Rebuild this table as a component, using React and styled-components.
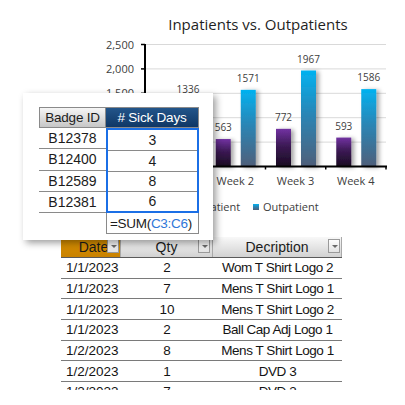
import styled, { createGlobalStyle } from 'styled-components';

const GlobalStyle = createGlobalStyle`
  html, body {
    margin: 0;
    padding: 0;
    background: #fff;
  }
  body {
    font-family: 'Liberation Sans', Arial, sans-serif;
  }
`;

const Page = styled.div`
  position: relative;
  width: 405px;
  height: 405px;
  overflow: hidden;
  background: #fff;
`;

const ChartArea = styled.div`
  margin-left: 100px;
  width: 305px;
  height: 222px;
  svg {
    display: block;
    font-family: 'Open Sans', 'DejaVu Sans', sans-serif;
  }
`;

const DataTable = styled.div`
  margin: 15px 0 0 61px;
  width: 281px;
  height: 153px;
  overflow: hidden;
`;

const HeadRow = styled.div`
  display: grid;
  grid-template-columns: 60px 92px 129px;
  height: 20px;
  border-bottom: 1px solid #5a5a5a;
`;

const HeadCell = styled.div`
  position: relative;
  display: flex;
  align-items: center;
  justify-content: center;
  padding-left: ${p => (p.$active ? '6px' : '0')};
  background: ${p =>
    p.$active
      ? 'linear-gradient(#d89000, #c98200)'
      : 'linear-gradient(#f8f8f8, #d2d2d2)'};
  border-right: 1px solid #a9a9a9;
  font-size: 14px;
  color: #1b1b1b;
`;

const DropButton = styled.span`
  position: absolute;
  right: ${p => p.$right}px;
  top: 2px;
  width: 12px;
  height: 14px;
  box-sizing: border-box;
  border: 1px solid #9a9a9a;
  background: linear-gradient(#fdfdfd, #e3e3e3);
  &::after {
    content: '';
    position: absolute;
    left: 3px;
    top: 5px;
    border-left: 3px solid transparent;
    border-right: 3px solid transparent;
    border-top: 3px solid #6a6a6a;
  }
`;

const Row = styled.div`
  display: grid;
  grid-template-columns: 60px 92px 129px;
  height: 20.67px;
  box-sizing: border-box;
  border-bottom: 1px solid #7a7a7a;
  font-size: 13.5px;
  color: #141414;
  align-items: center;
`;

const Cell = styled.div`
  text-align: ${p => p.$align || 'center'};
  padding-left: ${p => (p.$align === 'left' ? '5px' : '0')};
  letter-spacing: ${p => (p.$tight ? '-0.45px' : '0')};
  white-space: nowrap;
`;

const Card = styled.div`
  position: absolute;
  left: 23px;
  top: 93px;
  width: 190px;
  height: 147px;
  box-sizing: border-box;
  padding: 14px 0 0 16px;
  background: #fff;
  box-shadow: 3px 3px 7px rgba(0, 0, 0, 0.38);
`;

const Sheet = styled.div`
  display: grid;
  grid-template-columns: 67px 93px;
  grid-template-rows: 21px repeat(4, 21.25px) 21px;
  font-size: 14px;
  color: #1c1c1c;
`;

const SheetHead = styled.div`
  display: flex;
  align-items: center;
  justify-content: center;
  box-sizing: border-box;
  border: 1px solid #8a8a8a;
  border-left: ${p => (p.$dark ? 'none' : '1px solid #8a8a8a')};
  background: ${p =>
    p.$dark
      ? 'linear-gradient(#23558a, #0f3765)'
      : 'linear-gradient(#f6f6f6, #c6c6c6)'};
  color: ${p => (p.$dark ? '#fff' : '#1c1c1c')};
  font-size: 13.5px;
  letter-spacing: -0.2px;
`;

const BadgeCell = styled.div`
  display: flex;
  align-items: center;
  justify-content: center;
  box-sizing: border-box;
  border-bottom: 1px solid #8a8a8a;
`;

const Selection = styled.div`
  grid-column: 2;
  grid-row: 2 / span 4;
  display: grid;
  grid-template-rows: repeat(4, 1fr);
  border: 2px solid #1b6fe6;
  box-sizing: border-box;
`;

const ValueCell = styled.div`
  display: flex;
  align-items: center;
  justify-content: center;
  border-top: ${p => (p.$first ? 'none' : '1px solid #8a8a8a')};
`;

const FormulaCell = styled.div`
  grid-column: 2;
  grid-row: 6;
  display: flex;
  align-items: center;
  padding-left: 3px;
  box-sizing: border-box;
  border: 1px solid #8a8a8a;
  border-top: none;
  font-size: 13.5px;
  letter-spacing: -0.3px;
`;

const Ref = styled.span`
  color: #2f78d8;
`;

const weeks = [
  { label: 'Week 1', inp: 640, out: 1336 },
  { label: 'Week 2', inp: 563, out: 1571 },
  { label: 'Week 3', inp: 772, out: 1967 },
  { label: 'Week 4', inp: 593, out: 1586 },
];

const ticks = [2500, 2000, 1500, 1000, 500];

const base = 166.5;
const yOf = v => base - (v * 122) / 2500;

const sickDays = [
  { id: 'B12378', days: 3 },
  { id: 'B12400', days: 4 },
  { id: 'B12589', days: 8 },
  { id: 'B12381', days: 6 },
];

const sales = [
  ['1/1/2023', '2', 'Wom T Shirt Logo 2'],
  ['1/1/2023', '7', 'Mens T Shirt Logo 1'],
  ['1/1/2023', '10', 'Mens T Shirt Logo 2'],
  ['1/1/2023', '2', 'Ball Cap Adj Logo 1'],
  ['1/2/2023', '8', 'Mens T Shirt Logo 1'],
  ['1/2/2023', '1', 'DVD 3'],
  ['1/2/2023', '7', 'DVD 3'],
];

function Chart() {
  return (
    <svg width="305" height="222" viewBox="100 0 305 222">
      <defs>
        <linearGradient id="outGrad" x1="0" y1="0" x2="0" y2="1">
          <stop offset="0" stopColor="#02b2f0" />
          <stop offset="0.45" stopColor="#2a86b6" />
          <stop offset="1" stopColor="#4f5f7a" />
        </linearGradient>
        <linearGradient id="inGrad" x1="0" y1="0" x2="0" y2="1">
          <stop offset="0" stopColor="#7232a2" />
          <stop offset="0.45" stopColor="#3c1a55" />
          <stop offset="1" stopColor="#190b20" />
        </linearGradient>
        <filter id="barShadow" x="-30%" y="-10%" width="180%" height="130%">
          <feDropShadow dx="3" dy="1" stdDeviation="2" floodColor="#000" floodOpacity="0.35" />
        </filter>
      </defs>

      <text x="258" y="30" textAnchor="middle" fontSize="15" fill="#1f1f1f">
        Inpatients vs. Outpatients
      </text>

      {ticks.map(t => (
        <g key={t}>
          <line x1="145" x2="386" y1={yOf(t)} y2={yOf(t)} stroke="#d9d9d9" strokeWidth="1" />
          <line x1="141" x2="145" y1={yOf(t)} y2={yOf(t)} stroke="#000" strokeWidth="1.5" />
          <text x="134" y={yOf(t) + 4} textAnchor="end" fontSize="11" fill="#404040">
            {t.toLocaleString('en-US')}
          </text>
        </g>
      ))}

      {weeks.map((w, i) => {
        const start = 145 + 60.25 * i;
        return (
          <g key={w.label}>
            <rect x={start + 10.5} y={yOf(w.inp)} width="15" height={base - yOf(w.inp)} fill="url(#inGrad)" filter="url(#barShadow)" />
            <rect x={start + 35.5} y={yOf(w.out)} width="15" height={base - yOf(w.out)} fill="url(#outGrad)" filter="url(#barShadow)" />
            <text x={start + 18} y={yOf(w.inp) - 8} textAnchor="middle" fontSize="10" fill="#404040">
              {w.inp}
            </text>
            <text x={start + 43} y={yOf(w.out) - 8} textAnchor="middle" fontSize="10" fill="#404040">
              {w.out}
            </text>
            <text x={start + 30} y="185" textAnchor="middle" fontSize="11" fill="#404040">
              {w.label}
            </text>
            <line x1={start + 60.25} x2={start + 60.25} y1={base} y2={base + 3} stroke="#000" strokeWidth="1.5" />
          </g>
        );
      })}

      <line x1="145" x2="145" y1="44" y2="167.5" stroke="#000" strokeWidth="2" />
      <line x1="144" x2="387" y1={base} y2={base} stroke="#000" strokeWidth="2" />

      <rect x="184" y="204" width="6" height="6" fill="url(#inGrad)" />
      <text x="194" y="211" fontSize="11" fill="#404040">Inpatient</text>
      <rect x="253" y="204" width="6" height="6" fill="url(#outGrad)" />
      <text x="263" y="211" fontSize="11" fill="#404040">Outpatient</text>
    </svg>
  );
}

function SickDaysCard() {
  return (
    <Card>
      <Sheet>
        <SheetHead>Badge ID</SheetHead>
        <SheetHead $dark># Sick Days</SheetHead>
        {sickDays.map(r => (
          <BadgeCell key={r.id}>{r.id}</BadgeCell>
        ))}
        <Selection>
          {sickDays.map((r, i) => (
            <ValueCell key={r.id} $first={i === 0}>
              {r.days}
            </ValueCell>
          ))}
        </Selection>
        <FormulaCell>
          =SUM(<Ref>C3:C6</Ref>)
        </FormulaCell>
      </Sheet>
    </Card>
  );
}

function SalesTable() {
  return (
    <DataTable>
      <HeadRow>
        <HeadCell $active>
          Date
          <DropButton $right={1} />
        </HeadCell>
        <HeadCell>
          Qty
          <DropButton $right={2} />
        </HeadCell>
        <HeadCell>
          Decription
          <DropButton $right={1} />
        </HeadCell>
      </HeadRow>
      {sales.map((r, i) => (
        <Row key={i}>
          <Cell $align="left">{r[0]}</Cell>
          <Cell>{r[1]}</Cell>
          <Cell $tight>{r[2]}</Cell>
        </Row>
      ))}
    </DataTable>
  );
}

export default function App() {
  return (
    <>
      <GlobalStyle />
      <Page>
        <ChartArea>
          <Chart />
        </ChartArea>
        <SalesTable />
        <SickDaysCard />
      </Page>
    </>
  );
}
